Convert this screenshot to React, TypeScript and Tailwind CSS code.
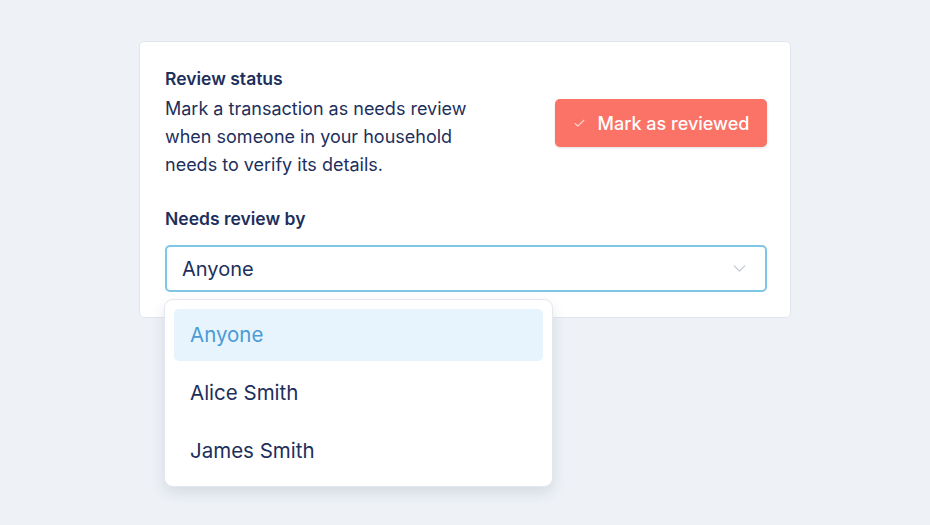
import { Check, ChevronDown } from "lucide-react";

const options = ["Anyone", "Alice Smith", "James Smith"];

export default function App() {
  const selected = "Anyone";

  return (
    <div
      className="min-h-screen w-full bg-[#eef2f7] pt-[41px] pl-[139px]"
      style={{ fontFamily: "Inter, 'Noto Sans', sans-serif" }}
    >
      <div className="w-[652px] rounded-[5px] border border-[#e1e6ee] bg-white pl-[25px] pr-[23px] pt-[25px] pb-[25px] text-[#1d2f5c]">
        <div className="flex items-start justify-between">
          <div>
            <h2 className="text-[17.5px] font-semibold leading-[24px]">Review status</h2>
            <p className="mt-[4px] w-[320px] text-[18px] leading-[28px]">
              Mark a transaction as needs review when someone in your household needs to verify its details.
            </p>
          </div>
          <button className="mt-[32px] flex h-[48px] w-[212px] items-center justify-center gap-[12px] rounded-[5px] bg-[#fb7266] text-[18px] font-medium text-white shadow-sm">
            <Check size={13} strokeWidth={2} className="text-[#ffd9d4]" />
            Mark as reviewed
          </button>
        </div>

        <div className="mt-[28px] text-[17.5px] font-semibold leading-[24px]">Needs review by</div>

        <div className="relative mt-[14px]">
          <div className="flex h-[47px] items-center justify-between rounded-[5px] border-2 border-[#7ec6e6] pl-[15px] pr-[15px]">
            <span className="text-[20px]">{selected}</span>
            <ChevronDown size={21} strokeWidth={1.5} className="text-[#c3c9d3]" />
          </div>

          <div className="absolute left-[-1px] top-[54px] z-10 flex w-[389px] flex-col gap-[6px] rounded-[9px] border border-[#e4e8ee] bg-white p-[9px] shadow-[0_6px_14px_rgba(30,50,90,0.12)]">
            {options.map((o) => (
              <div
                key={o}
                className={
                  o === selected
                    ? "flex h-[52px] items-center rounded-[5px] bg-[#e7f4fd] px-[16px] text-[20.5px] text-[#4a9bd6]"
                    : "flex h-[52px] items-center rounded-[5px] px-[16px] text-[20.5px] text-[#1d2f5c]"
                }
              >
                {o}
              </div>
            ))}
          </div>
        </div>
      </div>
    </div>
  );
}
